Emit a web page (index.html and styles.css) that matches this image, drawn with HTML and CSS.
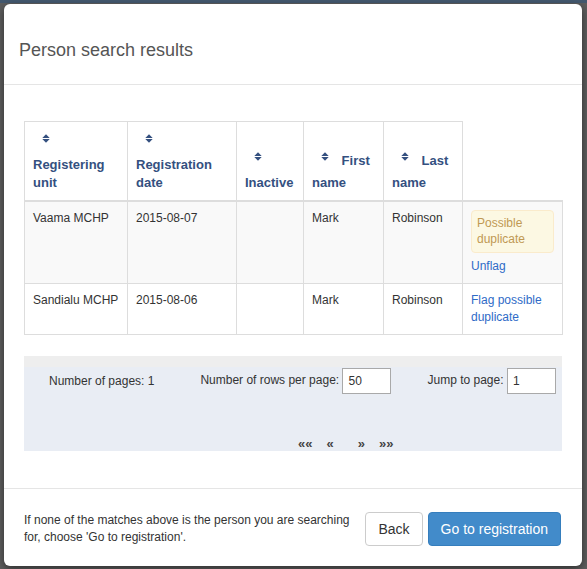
FILE: index.html
```html
<!DOCTYPE html>
<html lang="en">
<head>
<meta charset="utf-8">
<title>Person search results</title>
<link rel="stylesheet" href="styles.css">
</head>
<body>
<div class="topbar"></div>
<div class="modal">
  <div class="modal-header">
    <h4 class="modal-title">Person search results</h4>
  </div>
  <div class="modal-body">
    <table class="results">
      <colgroup>
        <col class="c-unit"><col class="c-date"><col class="c-inactive"><col class="c-first"><col class="c-last"><col class="c-actions">
      </colgroup>
      <thead>
        <tr>
          <th><span class="sort"><svg viewBox="0 0 8 9" width="8" height="9"><path d="M0.3 4 L4 0.2 L7.7 4 Z M0.3 5 L4 8.8 L7.7 5 Z"/></svg></span> Registering unit</th>
          <th><span class="sort"><svg viewBox="0 0 8 9" width="8" height="9"><path d="M0.3 4 L4 0.2 L7.7 4 Z M0.3 5 L4 8.8 L7.7 5 Z"/></svg></span> Registration date</th>
          <th><span class="sort"><svg viewBox="0 0 8 9" width="8" height="9"><path d="M0.3 4 L4 0.2 L7.7 4 Z M0.3 5 L4 8.8 L7.7 5 Z"/></svg></span> Inactive</th>
          <th><span class="sort"><svg viewBox="0 0 8 9" width="8" height="9"><path d="M0.3 4 L4 0.2 L7.7 4 Z M0.3 5 L4 8.8 L7.7 5 Z"/></svg></span> First name</th>
          <th><span class="sort"><svg viewBox="0 0 8 9" width="8" height="9"><path d="M0.3 4 L4 0.2 L7.7 4 Z M0.3 5 L4 8.8 L7.7 5 Z"/></svg></span> Last name</th>
          <th class="th-actions"></th>
        </tr>
      </thead>
      <tbody>
        <tr>
          <td>Vaama MCHP</td>
          <td>2015-08-07</td>
          <td></td>
          <td>Mark</td>
          <td>Robinson</td>
          <td><span class="flag">Possible duplicate</span><a href="#">Unflag</a></td>
        </tr>
        <tr>
          <td>Sandialu MCHP</td>
          <td>2015-08-06</td>
          <td></td>
          <td>Mark</td>
          <td>Robinson</td>
          <td><a href="#">Flag possible duplicate</a></td>
        </tr>
      </tbody>
    </table>
    <div class="pager">
      <div class="pager-row">
        <span class="pg-count">Number of pages: 1</span>
        <label class="pg-rows">Number of rows per page: <input type="text" value="50"></label>
        <label class="pg-jump">Jump to page: <input type="text" value="1"></label>
      </div>
      <div class="pager-nav">
        <span class="nav-first">««</span>
        <span class="nav-prev">«</span>
        <span class="nav-next">»</span>
        <span class="nav-last">»»</span>
      </div>
    </div>
  </div>
  <div class="modal-footer">
    <p class="footer-note">If none of the matches above is the person you are searching for, choose 'Go to registration'.</p>
    <div class="footer-buttons">
      <button class="btn btn-default" type="button">Back</button>
      <button class="btn btn-primary" type="button">Go to registration</button>
    </div>
  </div>
</div>
</body>
</html>
```
FILE: styles.css
```css
* { box-sizing: border-box; }
html, body { margin: 0; height: 100%; }
body {
  background: #5e5e5e;
  font-family: "Liberation Sans", Arial, sans-serif;
  font-size: 12px;
  line-height: 17px;
  color: #333;
  overflow: hidden;
}
.topbar { height: 3px; background: #44596f; }

.modal {
  margin: 1px 5px 0 4px;
  background: #fff;
  border-radius: 6px;
  box-shadow: 0 3px 9px rgba(0, 0, 0, 0.5);
}
.modal-header {
  padding: 33px 15px 21px;
  border-bottom: 1px solid #e5e5e5;
}
.modal-title {
  margin: 0;
  font-size: 18px;
  line-height: 26px;
  font-weight: normal;
  color: #555;
}
.modal-body { padding: 36px 20px 37px; }

.results {
  width: 538px;
  border-collapse: collapse;
  table-layout: fixed;
  margin-bottom: 21px;
}
.c-unit { width: 103px; }
.c-date { width: 109px; }
.c-inactive { width: 67px; }
.c-first { width: 80px; }
.c-last { width: 79px; }
.c-actions { width: 100px; }

.results th {
  padding: 8px;
  border: 1px solid #ddd;
  border-bottom: 2px solid #ddd;
  text-align: left;
  vertical-align: bottom;
  font-size: 13px;
  line-height: 18px;
  font-weight: bold;
  color: #34507f;
}
.results th.th-actions { border-top: none; border-right: none; }
.sort {
  display: inline-block;
  width: 8px;
  height: 26px;
  margin: 0 9px 0 9px;
  vertical-align: -9.5px;
}
.sort svg { display: block; margin-top: 4px; fill: #34507f; }

.results td {
  padding: 8px;
  border: 1px solid #ddd;
  vertical-align: top;
}
.results tbody tr:nth-child(odd) td { background: #f9f9f9; }

.flag {
  display: block;
  padding: 5px;
  margin-bottom: 5px;
  background: #fcf8e3;
  border: 1px solid #faebcc;
  border-radius: 4px;
  color: #c09853;
  line-height: 15.5px;
}
a { color: #2f6bc7; text-decoration: none; }

.pager {
  background: #e9edf4;
  border-top: 11px solid #eeeeee;
}
.pager-row {
  display: flex;
  align-items: center;
  padding: 1px 6px 0 25px;
}
.pg-rows { margin-left: 46px; }
.pg-jump { margin-left: 36px; }
.pager-row input {
  width: 49px;
  height: 26px;
  border: 1px solid #a9a9a9;
  padding: 0 5px;
  font: 12px "Liberation Sans", Arial, sans-serif;
  color: #333;
  background: #fff;
  vertical-align: middle;
}
.pager-nav {
  display: flex;
  padding: 43px 0 0 274px;
  font-size: 13px;
  line-height: 14px;
  font-weight: bold;
  color: #444;
}
.nav-prev { margin-left: 14px; }
.nav-next { margin-left: 24px; }
.nav-last { margin-left: 14px; }

.modal-footer {
  border-top: 1px solid #e5e5e5;
  padding: 23px 21px 20px 20px;
  display: flex;
  align-items: center;
}
.footer-note { width: 335px; margin: 0; }
.footer-buttons { margin-left: auto; display: flex; gap: 5px; }
.btn {
  font: 14px/20px "Liberation Sans", Arial, sans-serif;
  padding: 6px 12px;
  border: 1px solid;
  border-radius: 4px;
}
.btn-default { background: #fff; border-color: #ccc; color: #333; }
.btn-primary { background: #428bca; border-color: #357ebd; color: #fff; }
```
